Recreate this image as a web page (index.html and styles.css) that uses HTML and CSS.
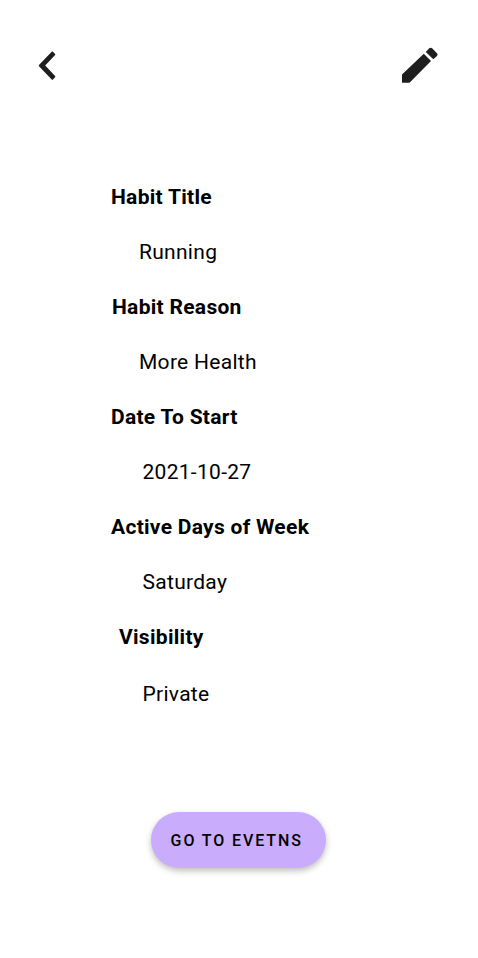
FILE: index.html
```html
<!DOCTYPE html>
<html lang="en">
<head>
<meta charset="utf-8">
<title>Habit</title>
<link rel="stylesheet" href="styles.css">
</head>
<body>
<header class="bar">
<button class="icon back" aria-label="Back"><svg width="18" height="30" viewBox="0 0 18 30"><path d="M12.700.700Q13.300.100 13.900.700L16.100 2.900Q16.700 3.500 16.100 4.100L6.200 14.600 16.100 25.100Q16.700 25.700 16.100 26.300L13.900 28.600Q13.300 29.200 12.700 28.600L0 15.200Q-.4 14.600 0 14z"/></svg></button>
<button class="icon edit" aria-label="Edit"><svg width="36" height="36" viewBox="0 0 36 36"><path d="M0 27.500 21.800 6.700 29 13.900 7.500 35.700H0zM23.800 4.900 27 1.600Q28.700-.1 30.400 1.600L34.700 5.900Q36.400 7.600 34.700 9.200L31.300 12.300z"/></svg></button>
</header>
<dl class="details">
<dt>Habit Title</dt><dd>Running</dd>
<dt class="reason">Habit Reason</dt><dd>More Health</dd>
<dt>Date To Start</dt><dd class="inset">2021-10-27</dd>
<dt>Active Days of Week</dt><dd class="inset">Saturday</dd>
<dt class="visibility">Visibility</dt><dd class="inset last">Private</dd>
</dl>
<button class="events">GO TO EVETNS</button>
</body>
</html>
```
FILE: styles.css
```css
* { box-sizing: border-box; }
body { margin: 0; height: 958px; background: #fff; color: #000; font-family: Roboto, sans-serif; overflow: hidden; }
button { border: 0; padding: 0; font: inherit; color: inherit; }
.bar { display: flex; justify-content: space-between; align-items: flex-start; height: 170px; padding: 47px 40px 0 39px; }
.icon { display: block; background: none; line-height: 0; }
.icon svg { display: block; fill: #1e1e1e; overflow: visible; }
.back { margin-top: 4px; }
.details { margin: 0; padding-left: 111px; font-size: 21px; line-height: 55px; letter-spacing: .29px; }
dt { height: 55px; font-weight: 700; }
dd { height: 55px; margin: 0 0 0 28px; }
.reason { padding-left: 1px; }
.visibility { padding-left: 8px; }
dd.inset { margin-left: 31.500px; }
dd.last { padding-top: 2px; }
.events { display: block; width: 174.600px; height: 56px; margin: 92.400px 0 0 151.400px; padding-right: 4px; border-radius: 28px; background: #c9acfc; font-size: 16px; font-weight: 500; letter-spacing: 1.900px; box-shadow: 0 3px 6px rgba(0,0,0,.25); }
```
